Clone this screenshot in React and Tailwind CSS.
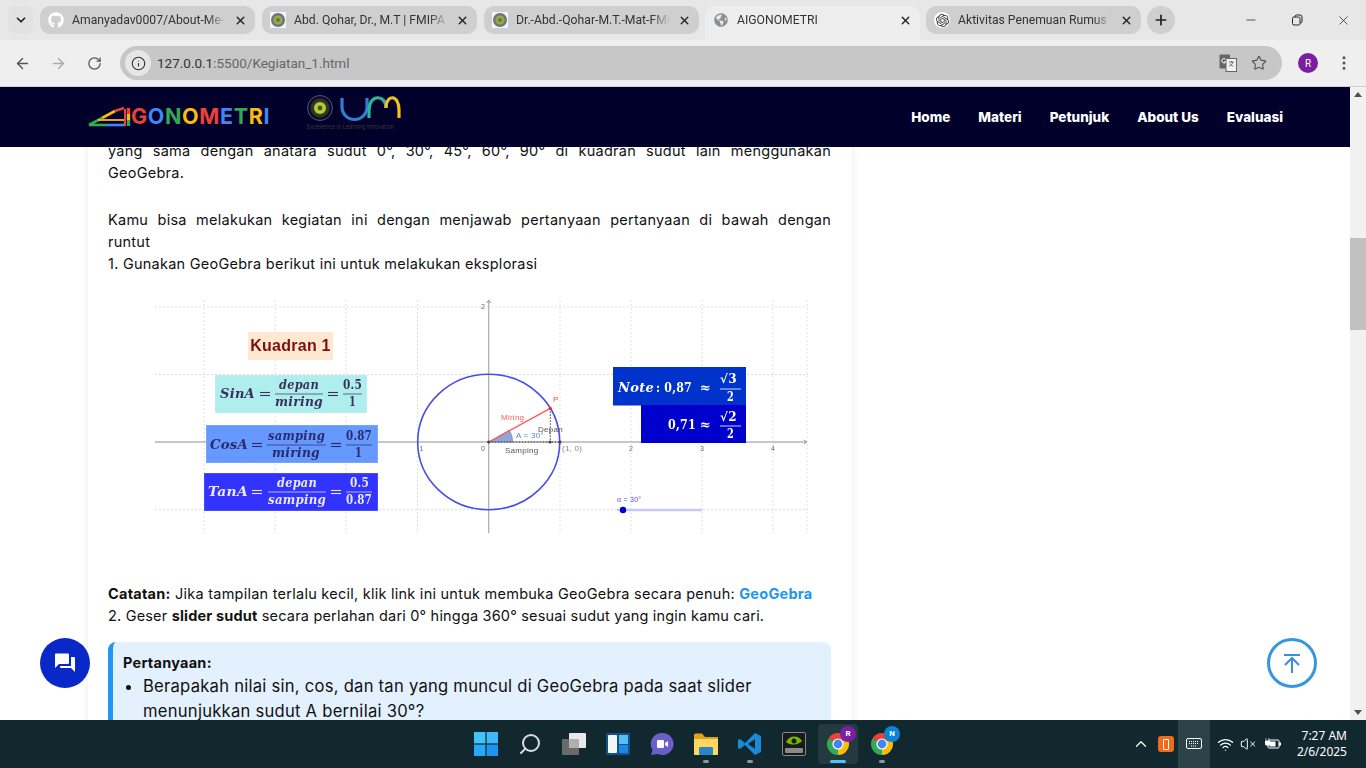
import React from 'react';
import { FaGithub, FaGlobeAmericas } from 'react-icons/fa';
import { SiOpenai } from 'react-icons/si';
import { ChevronDown, ArrowLeft, ArrowRight, RotateCw, Info, Star, X, Plus, Minus, EllipsisVertical, ChevronUp, Wifi, VolumeX, Search } from 'lucide-react';

const Seal = () => (
  <svg width="16" height="16" viewBox="0 0 16 16"><rect width="16" height="16" fill="#f4f4f4"/><circle cx="8" cy="8" r="7" fill="#6d7480"/><circle cx="8" cy="8" r="4.6" fill="#9aa84a"/><circle cx="8" cy="8" r="2" fill="#6c7a30"/></svg>
);

const Tab = ({ icon, title, active }) => (
  <div className={active
    ? "flex items-center w-[215px] h-[34px] self-end rounded-t-[10px] bg-[#ededed] pl-[8px] pr-[8px] pb-[6px] gap-[8px]"
    : "flex items-center w-[215px] h-[28px] rounded-[10px] bg-[#cfcfcf] pl-[8px] pr-[8px] gap-[8px] mb-[6px] self-end"}>
    <span className="w-4 h-4 shrink-0 flex items-center justify-center">{icon}</span>
    <span className="flex-1 overflow-hidden whitespace-nowrap text-[12.2px] text-[#333] [mask-image:linear-gradient(to_right,black_88%,transparent)]">{title}</span>
    <X size={13} strokeWidth={2.6} className="text-[#222] shrink-0" />
  </div>
);

const Chrome = ({ letter, badge }) => (
  <div className="relative w-6 h-6">
    <svg width="24" height="24" viewBox="0 0 24 24">
      <path d="M12 12L2.47 6.5A11 11 0 0 1 21.53 6.5Z" fill="#ea4335" />
      <path d="M12 12L21.53 6.5A11 11 0 0 1 12 23Z" fill="#fbbc05" />
      <path d="M12 12L12 23A11 11 0 0 1 2.47 6.5Z" fill="#34a853" />
      <circle cx="12" cy="12" r="5.6" fill="#fff" />
      <circle cx="12" cy="12" r="4.4" fill="#4285f4" />
    </svg>
    <span className={`absolute -top-[6px] -right-[6px] w-4 h-4 rounded-full ${badge} text-white text-[8px] font-bold flex items-center justify-center`}>{letter}</span>
  </div>
);

const Math1 = ({ x, y, w, fill, children, size = 12 }) => (
  <text x={x} y={y} textLength={w} lengthAdjust="spacingAndGlyphs" fontFamily="DejaVu Serif" fontWeight="700" fontStyle="italic" fontSize={size} fill={fill}>{children}</text>
);
const Up = ({ x, y, w, fill, children, size = 12 }) => (
  <text x={x} y={y} textLength={w} lengthAdjust="spacingAndGlyphs" fontFamily="DejaVu Serif" fontWeight="700" fontSize={size} fill={fill}>{children}</text>
);

const FormulaBox = ({ box, fill, ink, main, m, eq1, f1, n1, d1, eq2, f2, n2, d2, y }) => (
  <g>
    <rect x={box[0]} y={box[1]} width={box[2]} height={box[3]} fill={fill} stroke="#ffffff" strokeOpacity="0.25" />
    <Math1 x={m[0]} y={y + 5} w={m[1]} fill={ink}>{main}</Math1>
    <line x1={eq1} x2={eq1 + 10} y1={y - 0.5} y2={y - 0.5} stroke={ink} strokeWidth="1.1" />
    <line x1={eq1} x2={eq1 + 10} y1={y + 2.5} y2={y + 2.5} stroke={ink} strokeWidth="1.1" />
    <Math1 x={n1[0]} y={y - 4.5} w={n1[1]} fill={ink}>{n1[2]}</Math1>
    <line x1={f1[0]} x2={f1[1]} y1={y + 1} y2={y + 1} stroke={ink} strokeOpacity="0.7" />
    <Math1 x={d1[0]} y={y + 13} w={d1[1]} fill={ink}>{d1[2]}</Math1>
    <line x1={eq2} x2={eq2 + 10} y1={y - 0.5} y2={y - 0.5} stroke={ink} strokeWidth="1.1" />
    <line x1={eq2} x2={eq2 + 10} y1={y + 2.5} y2={y + 2.5} stroke={ink} strokeWidth="1.1" />
    <Up x={n2[0]} y={y - 4.5} w={n2[1]} fill={ink}>{n2[2]}</Up>
    <line x1={f2[0]} x2={f2[1]} y1={y + 1} y2={y + 1} stroke={ink} strokeOpacity="0.7" />
    <Up x={d2[0]} y={y + 13} w={d2[1]} fill={ink}>{d2[2]}</Up>
  </g>
);

const GeoGebra = () => {
  const gridY = [307, 374.5, 509.7];
  const gridX = [204, 275, 346, 417.5, 560, 631, 702, 773, 807];
  const small = { fontFamily: 'Liberation Sans', fontSize: 7, fill: '#666' };
  return (
    <svg width="723" height="260" viewBox="108 290 723 260" className="block blur-[0.35px]">
      {gridY.map(y => <line key={y} x1="155" x2="808" y1={y} y2={y} stroke="#dcdcdc" strokeDasharray="2 2" />)}
      {gridX.map(x => <line key={x} x1={x} x2={x} y1="300" y2="533" stroke="#e0e0e0" strokeDasharray="2 2" />)}
      <line x1="155" x2="806" y1="442" y2="442" stroke="#b4b4b4" strokeWidth="1.4" />
      <line x1="488.7" x2="488.7" y1="300" y2="533" stroke="#b4b4b4" strokeWidth="1.4" />
      <path d="M804 440L807 442L804 444" fill="none" stroke="#999" />
      <path d="M486.7 303L488.7 300L490.7 303" fill="none" stroke="#999" />
      <rect x="248" y="332" width="85" height="28" fill="#ffe8d1" />
      <text x="290.5" y="351" textAnchor="middle" fontFamily="Liberation Sans" fontWeight="700" fontSize="16" fill="#7f0f0f">Kuadran 1</text>
      <FormulaBox box={[215, 375, 152, 38]} fill="#aeeeec" ink="#3c3060" main="SinA" m={[220, 35]} eq1={260} f1={[275, 323]} n1={[279, 40, 'depan']} d1={[275, 48, 'miring']} eq2={328} f2={[343, 362]} n2={[343, 19, '0.5']} d2={[349, 7, '1']} y={393} />
      <FormulaBox box={[206, 425, 172, 38]} fill="#6699ff" ink="#2b2a6a" main="CosA" m={[210, 38]} eq1={252} f1={[267, 326]} n1={[268, 57, 'samping']} d1={[272, 48, 'miring']} eq2={331} f2={[346, 372]} n2={[346, 26, '0.87']} d2={[355, 7, '1']} y={444} />
      <FormulaBox box={[204, 473, 174, 38]} fill="#3333ff" ink="#e8e8ff" main="TanA" m={[208, 40]} eq1={252} f1={[268, 326]} n1={[277, 40, 'depan']} d1={[268, 58, 'samping']} eq2={331} f2={[346, 372]} n2={[350, 19, '0.5']} d2={[346, 26, '0.87']} y={491} />
      <ellipse cx="488.7" cy="442" rx="71" ry="67.7" fill="none" stroke="#4d4de6" strokeWidth="1.6" />
      <path d="M488.7 442H512.7A24 23 0 0 0 509.5 430Z" fill="#8fa6d6" stroke="#5a75b0" strokeWidth="0.5" />
      <line x1="488.7" y1="442" x2="550.3" y2="408.3" stroke="#ff5a5a" strokeWidth="1.4" />
      <line x1="550.3" y1="408.3" x2="550.3" y2="442" stroke="#333" strokeDasharray="1.5 1.5" />
      <line x1="488.7" y1="442" x2="560" y2="442" stroke="#333" strokeDasharray="1.5 1.5" />
      <circle cx="550.3" cy="408.3" r="1.6" fill="#ff2020" />
      <circle cx="550" cy="442" r="1.6" fill="#444" />
      <circle cx="560" cy="442" r="1.6" fill="#444" />
      <circle cx="488.7" cy="442" r="1.6" fill="#444" />
      <text x="553" y="402" fontFamily="Liberation Sans" fontSize="8" fill="#ff4040">P</text>
      <text x="501" y="420" fontFamily="Liberation Sans" fontSize="8" fill="#ff5a5a">Miring</text>
      <text x="516" y="438" fontFamily="Liberation Sans" fontSize="8" fill="#6080c0">A = 30°</text>
      <text x="538" y="432" fontFamily="Liberation Sans" fontSize="8" fill="#555">Depan</text>
      <text x="505" y="453" fontFamily="Liberation Sans" fontSize="8" fill="#555">Samping</text>
      <text x="562" y="451" fontFamily="Liberation Sans" fontSize="8" fill="#888">(1, 0)</text>
      <text x="481" y="451" {...small}>0</text>
      <text x="417" y="451" {...small}>-1</text>
      <text x="629" y="451" {...small}>2</text>
      <text x="700" y="451" {...small}>3</text>
      <text x="771" y="451" {...small}>4</text>
      <text x="481" y="309" {...small}>2</text>
      <rect x="613" y="367" width="133" height="38.5" fill="#0033cc" />
      <rect x="641" y="405" width="105" height="38" fill="#0000cc" />
      <Math1 x={618} y={392} w={36} fill="#fff">Note</Math1>
      <Up x={656} y={392} w={36} fill="#fff">: 0,87</Up>
      <text x="700" y="392" fontFamily="DejaVu Serif" fontWeight="700" fontSize="13" fill="#fff">≈</text>
      <text x="720" y="383" fontFamily="DejaVu Serif" fontWeight="700" fontSize="12" fill="#fff">√3</text>
      <line x1="720" x2="741" y1="389" y2="389" stroke="#fff" strokeOpacity="0.8" />
      <Up x={727} y={401} w={7} fill="#fff">2</Up>
      <Up x={668} y={429} w={28} fill="#fff">0,71</Up>
      <text x="700" y="429" fontFamily="DejaVu Serif" fontWeight="700" fontSize="13" fill="#fff">≈</text>
      <text x="720" y="421" fontFamily="DejaVu Serif" fontWeight="700" fontSize="12" fill="#fff">√2</text>
      <line x1="720" x2="741" y1="426" y2="426" stroke="#fff" strokeOpacity="0.8" />
      <Up x={727} y={438} w={7} fill="#fff">2</Up>
      <line x1="617" x2="702" y1="510" y2="510" stroke="#c8c8f5" strokeWidth="2.5" />
      <circle cx="623" cy="510" r="3.2" fill="#0000cc" />
      <text x="617" y="502" fontFamily="Liberation Sans" fontSize="7" fill="#5050e0">α = 30°</text>
    </svg>
  );
};

const Logo = () => (
  <div className="flex items-center gap-[37px] w-[400px]">
    <div className="flex items-center w-[182px]">
      <svg width="43" height="20" viewBox="0 0 43 20" className="shrink-0">
        <path d="M1 18L14 11" stroke="#34a853" strokeWidth="2.6" fill="none" />
        <path d="M14 11L27 4" stroke="#fbbc05" strokeWidth="2.6" fill="none" />
        <path d="M27 4L36 1" stroke="#ea4335" strokeWidth="2.6" fill="none" />
        <path d="M1 18H18" stroke="#34a853" strokeWidth="2.6" />
        <path d="M18 18H37" stroke="#4285f4" strokeWidth="2.6" />
        <path d="M10 13H37" stroke="#fbbc05" strokeWidth="1.8" />
        <path d="M37 2V19" stroke="#ea4335" strokeWidth="2" />
        <path d="M40.5 1V7" stroke="#ea4335" strokeWidth="3.4" />
        <path d="M40.5 7V13" stroke="#fbbc05" strokeWidth="3.4" />
        <path d="M40.5 13V19" stroke="#34a853" strokeWidth="3.4" />
      </svg>
      <span className="text-[21.5px] font-bold leading-none tracking-[0.65px]">
        <span className="text-[#ea4335]">G</span><span className="text-[#4285f4]">O</span><span className="text-[#34a853]">N</span><span className="text-[#fbbc05]">O</span><span className="text-[#ea4335]">M</span><span className="text-[#4285f4]">E</span><span className="text-[#34a853]">T</span><span className="text-[#fbbc05]">R</span><span className="text-[#4285f4]">I</span>
      </span>
    </div>
    <div className="relative h-[40px] w-[95px] shrink-0 -mt-[6px]">
      <svg width="95" height="30" viewBox="0 0 95 30" className="block">
        <circle cx="13" cy="14" r="12.5" fill="#0c0c30" stroke="#6a6a88" strokeWidth="0.8" />
        <circle cx="13" cy="14" r="9" fill="#2f3a18" stroke="#333" />
        <circle cx="13" cy="14" r="6" fill="#bcc838" />
        <circle cx="13" cy="14" r="2.4" fill="#465a18" />
        <path d="M35 4V13A12.5 12.5 0 0 0 60 13V4" fill="none" stroke="#2f7fd0" strokeWidth="3.2" />
        <path d="M62 24V16C62 0 79 0 79 14" fill="none" stroke="#2fb39a" strokeWidth="3.2" />
        <path d="M79 14C79 0 92 0 92 16V24" fill="none" stroke="#f0c020" strokeWidth="3.2" />
      </svg>
      <span className="absolute left-0 top-[31px] whitespace-nowrap text-[5.5px] leading-none text-[#3a3a40]">Excellence in Learning Innovation</span>
    </div>
  </div>
);

const Tray = () => (
  <div className="ml-auto flex items-center h-full">
    <ChevronUp size={18} className="text-white mr-[8px]" strokeWidth={1.6} />
    <div className="w-4 h-4 rounded-[3px] bg-[#f06a1c] flex items-center justify-center mr-[4px]">
      <span className="w-[6px] h-[11px] border border-white rounded-[1px]" />
    </div>
    <div className="w-8 h-full bg-[#2c4347] flex items-center justify-center">
      <svg width="16" height="12" viewBox="0 0 16 12"><rect x="0.5" y="0.5" width="15" height="10" rx="1.5" fill="none" stroke="#fff" /><path d="M3 3.5h10M3 5.5h10M5 8h6" stroke="#fff" strokeDasharray="1 1" /></svg>
    </div>
    <Wifi size={17} className="text-white ml-[7px]" strokeWidth={1.8} />
    <VolumeX size={16} className="text-white ml-[6px]" strokeWidth={1.5} />
    <svg width="17" height="14" viewBox="0 0 17 14" className="ml-[9px]"><rect x="3" y="3" width="11" height="8" rx="1" fill="none" stroke="#fff" /><rect x="4.5" y="4.5" width="6" height="5" fill="#fff" /><rect x="14" y="5.5" width="2" height="3" fill="#fff" /><path d="M1 1v3M4 1v3M0 4h5v2a2.5 2.5 0 0 1-5 0z" fill="#fff" stroke="#fff" strokeWidth="0.6" /></svg>
    <div className="w-[58px] ml-[7px] mr-[19px] text-right text-white text-[12px] leading-[16px] font-['Noto_Sans',sans-serif]">
      <div>7:27 AM</div><div>2/6/2025</div>
    </div>
  </div>
);

const Slot = ({ children, dot, active }) => (
  <div className={active ? "relative w-10 h-10 mx-[2px] rounded-[4px] bg-[#233a41] flex items-center justify-center" : "relative w-11 h-10 flex items-center justify-center"}>
    {children}
    {dot && <span className={active ? "absolute bottom-[1px] w-4 h-[3px] rounded-full bg-[#4cc2ff]" : "absolute bottom-[1px] w-[6px] h-[3px] rounded-full bg-[#8a979a]"} />}
  </div>
);

export default function App() {
  return (
    <div className="w-[1366px] h-[768px] overflow-hidden flex flex-col bg-white font-['Roboto',sans-serif]">
      <div className="h-[40px] bg-[#e7e7e7] flex items-stretch pl-[8px] shrink-0">
        <div className="w-[25px] h-[28px] mt-[6px] rounded-[8px] bg-[#e2e2e2] flex items-center justify-center mr-[7px]">
          <ChevronDown size={14} strokeWidth={3} className="text-[#222]" />
        </div>
        <div className="flex items-stretch gap-[7px] w-[1135px] shrink-0">
          <div className="flex items-end"><Tab icon={<FaGithub size={16} className="text-white" />} title="Amanyadav0007/About-Me-" /></div>
          <div className="flex items-end"><Tab icon={<Seal />} title="Abd. Qohar, Dr., M.T | FMIPA" /></div>
          <div className="flex items-end"><Tab icon={<Seal />} title="Dr.-Abd.-Qohar-M.T.-Mat-FMIPA" /></div>
          <div className="flex items-end -mx-px"><Tab active icon={<FaGlobeAmericas size={14} className="text-[#8a8f96]" />} title="AIGONOMETRI" /></div>
          <div className="flex items-end"><Tab icon={<span className="w-4 h-4 rounded-full bg-white flex items-center justify-center"><SiOpenai size={13} className="text-[#333]" /></span>} title="Aktivitas Penemuan Rumus Trigonometri" /></div>
          <div className="w-7 h-7 mt-[6px] rounded-full bg-[#cfcfcf] flex items-center justify-center -ml-px shrink-0">
            <Plus size={16} strokeWidth={2.6} className="text-[#222]" />
          </div>
        </div>
        <div className="flex items-start pt-[13px]">
          <Minus size={14} strokeWidth={1.3} className="text-[#222] ml-[69px]" />
          <svg width="12" height="12" viewBox="0 0 12 12" className="ml-[33px] mt-[1px]"><rect x="1.5" y="3" width="7.5" height="8" rx="1.5" fill="none" stroke="#222" /><path d="M4 3V2.5A1.5 1.5 0 0 1 5.5 1H9A2 2 0 0 1 11 3V7.5A1.5 1.5 0 0 1 9.5 9H9" fill="none" stroke="#222" /></svg>
          <X size={15} strokeWidth={1.2} className="text-[#222] ml-[33px]" />
        </div>
      </div>
      <div className="h-[47px] bg-[#efefef] border-b border-[#cfcfcf] flex items-center shrink-0">
        <ArrowLeft size={17} className="text-[#555] ml-[14px]" strokeWidth={2} />
        <ArrowRight size={17} className="text-[#aaa] ml-[19px]" strokeWidth={2} />
        <RotateCw size={15} className="text-[#555] ml-[20px]" strokeWidth={2} />
        <div className="ml-[18px] w-[1162px] h-[34px] rounded-full bg-[#c7c7c7] flex items-center pl-[5px] pr-[15px]">
          <span className="w-[26px] h-[26px] rounded-full bg-[#e6e6e6] flex items-center justify-center">
            <Info size={15} className="text-[#333]" strokeWidth={1.8} />
          </span>
          <span className="ml-[6px] text-[13.5px] text-[#333]">127.0.0.1<span className="text-[#666]">:5500/Kegiatan_1.html</span></span>
          <span className="ml-auto flex items-center gap-[14px]">
            <svg width="18" height="18" viewBox="0 0 18 18">
              <rect x="0.5" y="0.5" width="10.5" height="14" rx="1" fill="#666" />
              <rect x="7" y="4.5" width="10.5" height="13" fill="#f2f2f2" stroke="#666" />
              <path d="M10 8h5M12.5 7v1.5M14 8c-.4 2-2 3.6-4 4.2M11 9.5c.6 1.2 1.8 2.3 3.4 2.8" fill="none" stroke="#666" strokeWidth="0.9" />
              <path d="M6.5 5.2A2.2 2.2 0 1 0 6.8 8H5" fill="none" stroke="#fff" strokeWidth="1" />
            </svg>
            <Star size={16} className="text-[#555]" strokeWidth={1.7} />
          </span>
        </div>
        <span className="ml-[16px] w-5 h-5 rounded-full bg-[#7b1fa2] text-white text-[10px] flex items-center justify-center">R</span>
        <EllipsisVertical size={18} className="text-[#555] ml-[17px]" />
      </div>

      <div className="relative flex-1 min-h-0 flex">
        <div className="flex-1 min-w-0 flex flex-col font-['Inter',sans-serif]">
          <div className="h-[60px] bg-[#00002a] shrink-0 flex items-center pl-[88px] pr-[67px] relative z-10">
            <Logo />
            <nav className="ml-auto flex items-center gap-[28px] text-white text-[13.5px] font-extrabold">
              <span>Home</span><span>Materi</span><span>Petunjuk</span><span>About Us</span><span>Evaluasi</span>
            </nav>
          </div>
          <div className="flex-1 min-h-0 overflow-hidden pl-[88px]">
            <div className="w-[764px] bg-white shadow-[0_0_8px_rgba(0,0,0,0.08)] pl-[20px] pr-[21px] -mt-[7px] text-[14.5px] tracking-[0.25px] leading-[22px] text-[#111]">
              <p><span className="block [text-align-last:justify]">yang sama dengan anatara sudut 0°, 30°, 45°, 60°, 90° di kuadran sudut lain menggunakan</span><span className="block">GeoGebra.</span></p>
              <p className="mt-[25px]"><span className="block [text-align-last:justify]">Kamu bisa melakukan kegiatan ini dengan menjawab pertanyaan pertanyaan di bawah dengan</span><span className="block">runtut</span></p>
              <p>1. Gunakan GeoGebra berikut ini untuk melakukan eksplorasi</p>
              <div className="mt-[15px]"><GeoGebra /></div>
              <p className="mt-[33px] whitespace-nowrap"><b>Catatan:</b> Jika tampilan terlalu kecil, klik link ini untuk membuka GeoGebra secara penuh: <b className="text-[#2196f3]">GeoGebra</b></p>
              <p className="tracking-[0.18px]">2. Geser <b>slider sudut</b> secara perlahan dari 0° hingga 360° sesuai sudut yang ingin kamu cari.</p>
              <div className="mt-[15px] rounded-[8px] bg-[#e3f0fd] border-l-[5px] border-[#2196f3] pl-[10px] pr-[20px] pt-[10px] pb-4">
                <p className="font-bold">Pertanyaan:</p>
                <ul className="list-disc pl-[20px] text-[16.6px] leading-[25px]">
                  <li>Berapakah nilai sin, cos, dan tan yang muncul di GeoGebra pada saat slider menunjukkan sudut A bernilai 30°?</li>
                </ul>
              </div>
            </div>
          </div>
        </div>
        <div className="w-4 bg-[#f1f1f1] flex flex-col items-center shrink-0">
          <span className="mt-[5px] w-0 h-0 border-x-[4px] border-x-transparent border-b-[5px] border-b-[#505050]" />
          <span className="mt-[141px] w-full h-[92px] bg-[#c1c1c1]" />
          <span className="mt-auto mb-[5px] w-0 h-0 border-x-[4px] border-x-transparent border-t-[5px] border-t-[#505050]" />
        </div>
        <button className="absolute left-[40px] top-[551px] w-[50px] h-[50px] rounded-full bg-[#0a28c8] flex items-center justify-center">
          <svg width="22" height="20" viewBox="0 0 22 20"><path d="M1 1.5A1 1 0 0 1 2 .5H14A1 1 0 0 1 15 1.5V10A1 1 0 0 1 14 11H5L1 15Z" fill="#fff" /><path d="M17 4H20A1 1 0 0 1 21 5V19L17 15H7A1 1 0 0 1 6 14V13H17Z" fill="#fff" /></svg>
        </button>
        <button className="absolute left-[1267px] top-[551px] w-[50px] h-[50px] rounded-full border-[3px] border-[#3498e0] bg-white flex items-center justify-center">
          <svg width="18" height="20" viewBox="0 0 18 20" fill="none" stroke="#3a8ee0" strokeWidth="2"><path d="M1 2H17M9 20V6M2 12L9 5L16 12" /></svg>
        </button>
      </div>

      <div className="h-[48px] bg-[#12282f] flex items-center shrink-0 pl-[464px]">
        <Slot>
          <svg width="24" height="24" viewBox="0 0 24 24"><rect width="11.4" height="11.4" fill="#3fc4fb" /><rect x="12.6" width="11.4" height="11.4" fill="#3fb8f8" /><rect y="12.6" width="11.4" height="11.4" fill="#2aa8f5" /><rect x="12.6" y="12.6" width="11.4" height="11.4" fill="#1a96f2" /></svg>
        </Slot>
        <Slot><Search size={24} className="text-[#d8dde0] -scale-x-100" strokeWidth={2} /></Slot>
        <Slot>
          <svg width="24" height="22" viewBox="0 0 24 22"><rect x="7" y="0" width="17" height="15" rx="1" fill="#e8e8e8" /><rect x="0" y="6" width="17" height="16" rx="1" fill="#6a6a6a" /><rect x="7" y="6" width="10" height="9" fill="#b0b0b0" /></svg>
        </Slot>
        <Slot>
          <svg width="24" height="22" viewBox="0 0 24 22"><rect width="24" height="22" rx="1" fill="#15508e" /><rect x="2" y="2" width="9" height="18" rx="1" fill="#f4f6f8" /><rect x="13" y="2" width="9" height="9" fill="#58c0f0" /><rect x="13" y="12" width="9" height="8" fill="#1a8ae0" /></svg>
        </Slot>
        <Slot>
          <svg width="24" height="24" viewBox="0 0 24 24"><path d="M12 1A11 11 0 1 1 8 22L1 23L2.5 18A11 11 0 0 1 12 1Z" fill="#6a5fc8" /><rect x="7" y="8" width="7" height="8" rx="1" fill="#fff" /><path d="M15 11L18 9V15L15 13Z" fill="#fff" /></svg>
        </Slot>
        <Slot dot>
          <svg width="24" height="22" viewBox="0 0 24 22"><path d="M0 2A1.5 1.5 0 0 1 1.5 .5H8L11 4H24V21A1 1 0 0 1 23 22H1A1 1 0 0 1 0 21Z" fill="#d9a520" /><path d="M0 6H24V21A1 1 0 0 1 23 22H1A1 1 0 0 1 0 21Z" fill="#ffd75e" /><rect x="5" y="14" width="14" height="8" rx="1" fill="#2a84c8" /></svg>
        </Slot>
        <Slot dot>
          <svg width="24" height="24" viewBox="0 0 24 24"><path d="M17 1L23 4V20L17 23L7 13L2 17L0 16V8L2 7L7 11Z" fill="#1a8ad8" /><path d="M17 7V17L10 12Z" fill="#12282f" /></svg>
        </Slot>
        <Slot>
          <svg width="24" height="24" viewBox="0 0 24 24"><rect x=".5" y=".5" width="23" height="23" rx="1.5" fill="#1a1a1a" stroke="#888" /><path d="M4 10C8 3 16 3 20 9C16 13 10 14 4 10Z" fill="#76b900" /><circle cx="12" cy="9" r="2.5" fill="#1a1a1a" /><rect x="3" y="16" width="18" height="5" rx="1" fill="#8a8a8a" /></svg>
        </Slot>
        <Slot dot active><Chrome letter="R" badge="bg-[#7b1fa2]" /></Slot>
        <Slot dot><Chrome letter="N" badge="bg-[#0a84d8]" /></Slot>
        <Tray />
      </div>
    </div>
  );
}
